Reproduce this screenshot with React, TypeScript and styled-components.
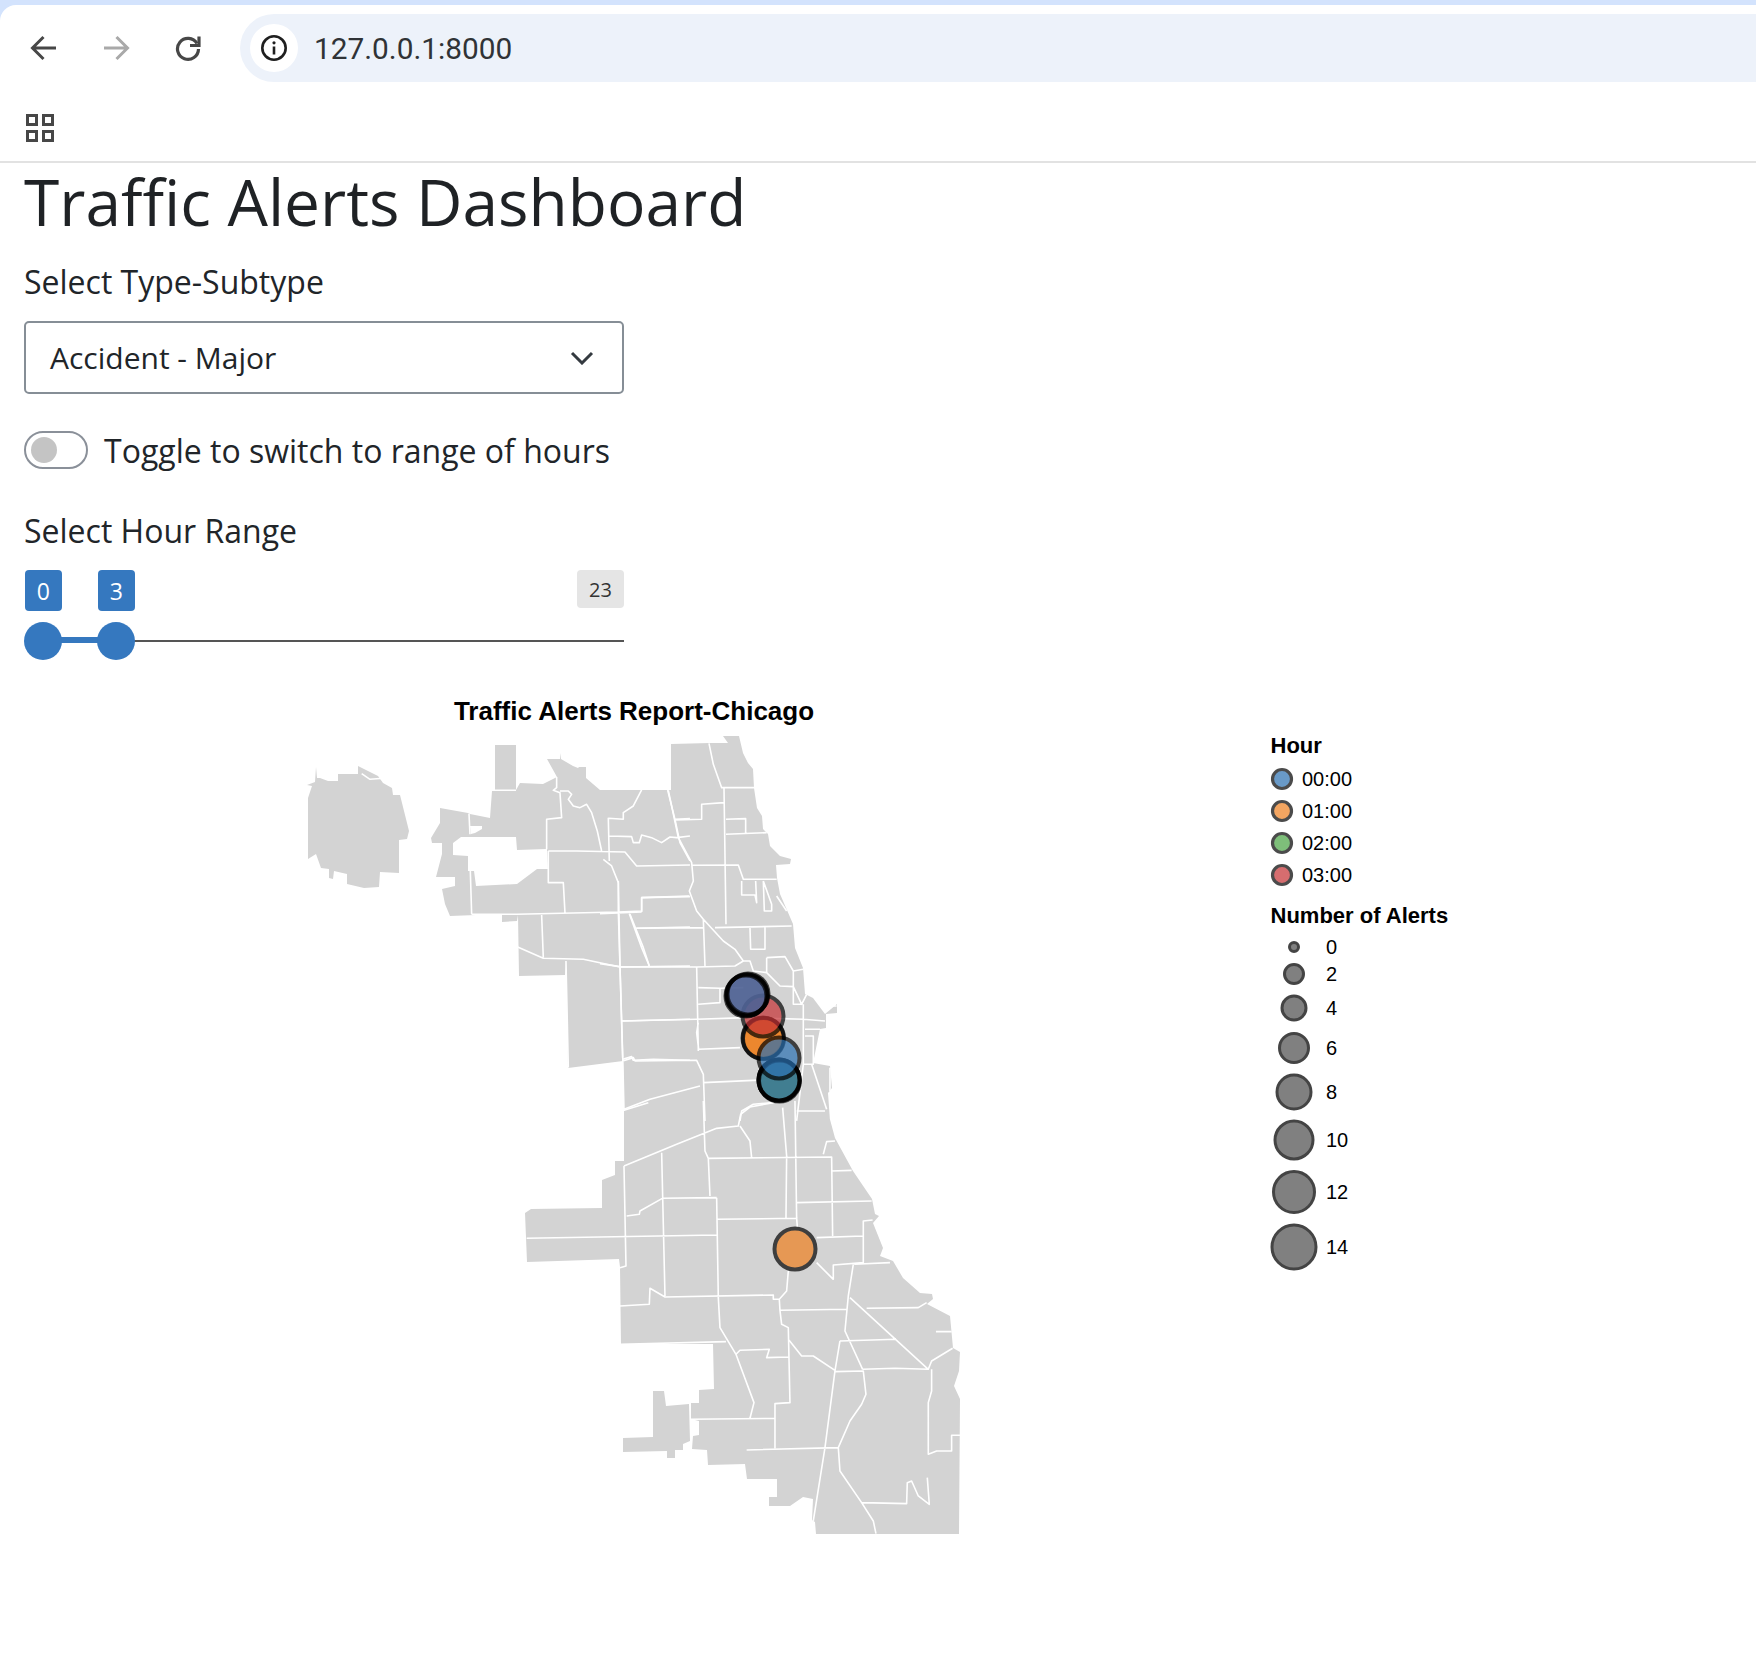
import React from 'react'
import styled, { createGlobalStyle } from 'styled-components'

const GlobalStyle = createGlobalStyle`
    html, body {
        margin: 0;
        padding: 0;
        background: #fff;
    }
    body {
        font-family: 'Open Sans', sans-serif;
        color: #212529;
        overflow: hidden;
    }
`

const Page = styled.div`
    width: 1756px;
    height: 1676px;
    background: #d3e3fd;
    overflow: hidden;
`
const Window = styled.div`
    margin-top: 5px;
    height: 1671px;
    background: #fff;
    border-top-left-radius: 16px;
`
const Toolbar = styled.div`
    height: 91px;
    box-sizing: border-box;
    padding-top: 9px;
    display: flex;
    align-items: flex-start;
`
const NavButton = styled.div`
    width: 72px;
    height: 68px;
    display: flex;
    align-items: center;
    justify-content: center;
    flex: none;
`
const NavGroup = styled.div`
    display: flex;
    padding-left: 8px;
    width: 232px;
    flex: none;
    box-sizing: content-box;
`
const UrlPill = styled.div`
    flex: 1;
    height: 68px;
    background: #edf2fa;
    border-radius: 34px 0 0 34px;
    display: flex;
    align-items: center;
    padding-left: 10px;
`
const InfoChip = styled.div`
    width: 48px;
    height: 48px;
    border-radius: 50%;
    background: #fff;
    display: flex;
    align-items: center;
    justify-content: center;
`
const UrlText = styled.span`
    font-family: Roboto, sans-serif;
    font-size: 29.8px;
    color: #303336;
    margin-left: 16px;
`
const BookmarkBar = styled.div`
    height: 67px;
    box-sizing: border-box;
    border-bottom: 2px solid #e2e2e2;
    padding: 18px 0 0 26px;
`
const Content = styled.main`
    padding-left: 24px;
`
const Title = styled.h1`
    margin: 0;
    padding-top: 2px;
    font-size: 64px;
    font-weight: 400;
    line-height: 74px;
    height: 78px;
    color: #1f2225;
`
const FieldLabel = styled.div<{ $top: number }>`
    font-size: 32px;
    line-height: 44px;
    margin-top: ${(p) => p.$top}px;
`
const SelectBox = styled.div`
    width: 600px;
    height: 73px;
    box-sizing: border-box;
    margin-top: 17px;
    border: 2px solid #868e96;
    border-radius: 5px;
    display: flex;
    align-items: center;
    justify-content: space-between;
    padding: 0 28px 0 24px;
    font-size: 30px;
`
const ToggleRow = styled.div`
    display: flex;
    align-items: center;
    gap: 16px;
    margin-top: 37px;
    height: 38px;
    font-size: 32px;
`
const ToggleTrack = styled.div`
    width: 64px;
    height: 38px;
    box-sizing: border-box;
    border: 2px solid #8a9099;
    border-radius: 19px;
    padding: 4px 0 0 5px;
`
const ToggleKnob = styled.div`
    width: 26px;
    height: 26px;
    border-radius: 50%;
    background: #c4c4c4;
`
const Slider = styled.div`
    width: 600px;
    margin-top: 17px;
`
const BadgeRow = styled.div`
    display: flex;
    align-items: flex-start;
    padding-left: 1px;
`
const Badge = styled.div`
    width: 36.500px;
    height: 41px;
    border-radius: 4px;
    background: #3578bf;
    color: #fff;
    font-size: 23px;
    display: flex;
    align-items: center;
    justify-content: center;
    margin-right: 36.500px;
`
const MaxBadge = styled.div`
    width: 47px;
    height: 38px;
    margin-left: auto;
    border-radius: 4px;
    background: #e5e5e5;
    color: #333;
    font-size: 20px;
    display: flex;
    align-items: center;
    justify-content: center;
`
const Track = styled.div`
    position: relative;
    height: 2px;
    margin: 29px 0 0 19px;
    background: #555;
`
const TrackFill = styled.div`
    position: absolute;
    left: 0;
    top: -3px;
    width: 73px;
    height: 6px;
    background: #3578bf;
`
const Handle = styled.div<{ $left: number }>`
    position: absolute;
    top: -18px;
    left: ${(p) => p.$left - 19}px;
    width: 38px;
    height: 38px;
    border-radius: 50%;
    background: #3578bf;
`
const Chart = styled.svg`
    display: block;
    margin: 39px 0 0 -24px;
    font-family: 'Liberation Sans', Arial, sans-serif;
`
const ChartTitle = styled.text`
    font-size: 26px;
    font-weight: 700;
    fill: #000;
    text-anchor: middle;
`
const LegendTitle = styled.text`
    font-size: 22px;
    font-weight: 700;
    fill: #000;
`
const LegendLabel = styled.text`
    font-size: 20px;
    fill: #000;
`
const Land = styled.path`
    fill: #d3d3d3;
`
const Hole = styled.path`
    fill: #fff;
`
const Borders = styled.path`
    fill: none;
    stroke: #fff;
    stroke-width: 4.8;
    stroke-linejoin: round;
`
const Mark = styled.circle`
    stroke: #000;
    stroke-width: 4;
    opacity: 0.7;
`
const HourDot = styled.circle`
    stroke: #000;
    stroke-width: 3.2;
    opacity: 0.7;
`
const SizeDot = styled.circle`
    fill: #808080;
    stroke: #444;
    stroke-width: 3;
`

const BLUE = '#2b70b1'
const ORANGE = '#ef801f'
const GREEN = '#48a443'
const RED = '#c53033'

const LAND_MAIN =
    'M495 744L516 744L516 789L520 782L543 783L557 776L547 758L560 758L560 752L561 758L573 765L578 767L579 766L586 766L586 777L600 789L671 789L671 743L710 742L728 742L723 735L739 735L743 752L748 762L753 768L754 787L757 807L762 815L763 828L768 833L770 845L780 855L791 858L790 863L776 864L777 877L780 893L793 923L795 947L803 967L805 993L813 997L825 1013L837 1003L837 1012L826 1013L826 1027L820 1028L813 1062L830 1065L832 1087L828 1092L830 1120L825 1100L835 1137L853 1170L872 1198L875 1213L879 1215L873 1222L883 1247L880 1255L893 1260L903 1277L920 1292L932 1293L933 1298L927 1303L950 1315L953 1347L960 1351L959 1370L954 1385L960 1398L959 1533L816 1533L815 1521L812 1519L813 1498L803 1496L790 1505L769 1505L769 1496L777 1496L777 1478L747 1478L745 1463L708 1464L707 1449L692 1448L693 1435L699 1434L699 1420L691 1418L691 1402L699 1402L699 1389L714 1388L713 1343L621 1343L620 1266L619 1258L527 1261L525 1212L531 1208L602 1207L602 1179L615 1174L615 1160L624 1160L624 1100L623 1060L568 1067L566 960L565 974L519 975L518 914L517 920L502 921L502 913L450 915L445 903L442 888L455 885L455 876L436 876L442 853L442 842L432 842L431 837L440 822L440 807L468 812L470 813L490 817L492 790L495 790Z'
const LAND_OHARE =
    'M308 797L312 785L307 784L315 781L316 766L317 777L320 777L328 780L338 780L338 773L358 773L358 765L378 775L383 782L392 787L393 794L400 794L409 830L407 838L399 839L399 872L380 871L379 886L364 887L347 883L347 873L334 870L333 878L329 877L329 868L321 867L316 853L308 858Z'
const LAND_SOUTH =
    'M653 1390L664 1390L666 1405L689 1403L690 1440L683 1443L683 1449L675 1449L675 1457L667 1457L667 1450L623 1451L623 1437L653 1436Z'
const HOLES =
    'M453 842L461 836L516 836L517 849L547 848L548 868L537 868L517 883L476 885L474 870L468 870L468 855L453 854Z M470 825L482 825L482 828L475 832L471 833Z'

const LINES_NORTHWEST = [
    'M215 248L240 265L280 262',
    'M605 298L678 298',
    'M537 368L540 430',
    'M800 258L800 290L790 298L810 305L815 380L770 385L770 475',
    'M810 300L835 300L845 310L835 325L850 345L870 350L890 340L905 365L922 420L935 480',
    'M955 380L958 510',
    'M955 382L1000 385L1000 365L1030 345L1055 297',
    'M958 435L1025 437L1030 455L1048 455L1055 432L1085 440L1115 455L1140 438L1160 440L1200 435',
    'M1133 297L1155 385L1200 383',
    'M1155 385L1170 455L1200 510',
    'M775 480L860 480L1005 483L1040 525L1200 522',
    'M775 480L775 575L820 575L825 665',
    'M940 505L965 525L985 575L985 660L990 825L998 1100',
    'M545 670L680 670L985 663L1055 660L1055 620L1200 617',
    'M541 540L545 670',
    'M755 672L760 800',
    'M683 768L760 802L880 805L990 828L1200 825',
    'M828 810L835 1130',
    'M1018 668L1055 770L1078 825',
    'M1035 712L1200 708',
    'M995 990L1200 985',
    'M998 1105L1025 1097L1030 1108L1090 1105L1200 1108',
]

const LINES_CENTRAL = [
    'M327 67L340 130L365 200L372 200L378 610',
    'M372 200L465 200',
    'M372 245L305 250L305 295L225 297',
    'M205 208L235 350L275 425L280 480L268 510L290 570L310 595L370 660L405 685L430 720L450 720L460 750L500 755L540 795L580 797L605 850L620 820',
    'M378 295L437 293L437 337',
    'M378 340L500 335',
    'M278 433L415 432L430 475L530 475',
    'M425 480L425 522L465 522L470 545L467 480',
    'M490 480L515 550L515 570L493 570L490 480',
    'M310 595L315 735',
    'M345 620L575 615',
    'M450 620L452 685L495 685L495 618',
    'M110 622L310 620',
    'M125 573L125 530L268 525',
    'M0 578L125 573',
    'M90 580L130 680L148 735',
    'M0 728L60 737L290 738L405 735L430 720',
    'M55 480L60 737L68 1000L72 1170',
    'M290 738L295 990',
    'M295 800L360 802L360 845L295 850',
    'M360 802L430 800',
    'M65 900L290 895L440 890L610 895L675 900',
    'M295 905L290 935L296 985L420 980',
    'M68 1020L100 1010L105 1020L290 1018L310 1060L315 1200',
    'M310 1085L530 1075L590 1030',
    'M72 1165L150 1135L300 1095',
    'M500 710L555 707L580 750L610 745',
    'M500 710L500 755',
    'M580 750L580 850L605 850',
    'M610 850L610 1030L590 1200',
    'M615 925L660 925',
    'M615 945L640 945L640 1030L610 1030',
    'M635 1030L680 1165',
    'M420 1200L425 1170L460 1150L520 1145',
    'M530 525L560 570',
    'M690 1040L690 1110',
    'M680 855L710 855',
]

const LINES_SOUTH = [
    'M372 28L445 5',
    'M372 195L530 130L650 82L715 75L722 40L750 18L820 5',
    'M610 0L615 150L625 172L630 285',
    'M720 75L750 120L755 170',
    'M848 20L860 165L858 352',
    'M885 0L890 350L892 378',
    'M890 30L975 30',
    'M625 172L995 168L998 405',
    'M970 160L980 122L1005 120',
    'M995 210L1055 208',
    'M890 305L1115 300',
    'M650 355L890 352',
    'M650 290L487 292L420 330L418 340L380 345',
    'M485 155L495 585',
    'M650 290L655 590L660 680L708 760L762 905L750 952',
    'M372 195L378 495L360 500',
    'M80 412L650 402',
    'M360 615L448 610L450 562L495 588L820 582L820 595L838 595L860 570L865 510',
    'M838 595L840 628L845 670L865 680L870 905L825 908L825 1042',
    'M840 628L1040 625',
    'M1090 405L950 410',
    'M1118 357L1090 360L1090 485L1000 492L1000 535L950 485',
    'M1063 490L1170 485',
    'M1060 490L1045 585L1035 690L1088 805',
    'M1050 590L1285 805',
    'M1100 622L1255 620L1280 605',
    'M1020 720L1188 715',
    'M1020 720L1005 810L975 1040L940 1260',
    'M865 715L905 765L940 765L1005 808',
    'M1005 812L1090 810L1098 880L1085 910L1050 960L1015 1040L740 1047',
    'M1088 805L1185 802L1285 805L1295 780L1358 742',
    'M1295 805L1295 870L1285 905L1285 1060L1310 1050L1355 1050L1355 1003L1380 1003',
    'M1308 692L1355 692',
    'M1015 1040L1020 1110L1085 1205L1120 1260L1128 1298',
    'M1085 1205L1220 1208L1222 1145L1235 1140L1255 1185L1288 1210L1282 1130',
    'M572 955L825 952',
    'M362 730L678 722',
    'M708 760L720 748L808 745L800 770L865 768',
]

// hour colour, x, y for every alert circle, drawn in this order.
// 'none' rings thicken the outline where several circles nearly coincide
const MARKS: [string, number, number][] = [
    [ORANGE, 763, 1037],
    [ORANGE, 763.5, 1037.5],
    [RED, 763, 1015],
    [RED, 747, 994],
    [BLUE, 747, 994],
    ['none', 746, 995],
    ['none', 748, 993],
    [ORANGE, 779, 1079],
    [GREEN, 779, 1079],
    [BLUE, 779, 1079],
    ['none', 779.5, 1080],
    [BLUE, 779, 1057],
    [ORANGE, 795, 1248],
]

const HOURS: [string, string, number][] = [
    ['00:00', BLUE, 778],
    ['01:00', ORANGE, 810],
    ['02:00', GREEN, 842],
    ['03:00', RED, 874],
]

const SIZES: [string, number, number][] = [
    ['0', 946, 4.5],
    ['2', 973, 9.5],
    ['4', 1007, 12],
    ['6', 1047, 14.5],
    ['8', 1091, 17],
    ['10', 1139, 19],
    ['12', 1191, 20.5],
    ['14', 1246, 22],
]

function ChromeIcons() {
    return (
        <NavGroup>
            <NavButton>
                <svg width="28" height="26" viewBox="0 0 28 26">
                    <path d="M26 13H3M13.5 2L2.5 13l11 11" fill="none" stroke="#474747" strokeWidth="3" />
                </svg>
            </NavButton>
            <NavButton>
                <svg width="28" height="26" viewBox="0 0 28 26">
                    <path d="M2 13h23M14.5 2l11 11-11 11" fill="none" stroke="#a9a9a9" strokeWidth="3" />
                </svg>
            </NavButton>
            <NavButton>
                <svg width="28" height="28" viewBox="0 0 28 28">
                    <path d="M23 9.5A10.5 10.5 0 1 0 24.5 15" fill="none" stroke="#474747" strokeWidth="3.2" />
                    <path d="M25 2.500v9h-9" fill="none" stroke="#474747" strokeWidth="3.2" />
                </svg>
            </NavButton>
        </NavGroup>
    )
}

function App() {
    return (
        <Page>
            <GlobalStyle />
            <Window>
                <Toolbar>
                    <ChromeIcons />
                    <UrlPill>
                        <InfoChip>
                            <svg width="28" height="28" viewBox="0 0 28 28">
                                <circle cx="14" cy="14" r="11.7" fill="none" stroke="#1f1f1f" strokeWidth="2.6" />
                                <path d="M14 12.5v8" stroke="#1f1f1f" strokeWidth="2.6" />
                                <circle cx="14" cy="8.8" r="1.6" fill="#1f1f1f" />
                            </svg>
                        </InfoChip>
                        <UrlText>127.0.0.1:8000</UrlText>
                    </UrlPill>
                </Toolbar>
                <BookmarkBar>
                    <svg width="28" height="28" viewBox="0 0 28 28">
                        <path
                            d="M1.500 1.500h9v9h-9zM17.500 1.500h9v9h-9zM1.500 17.500h9v9h-9zM17.500 17.500h9v9h-9z"
                            fill="none"
                            stroke="#474747"
                            strokeWidth="3"
                        />
                    </svg>
                </BookmarkBar>
                <Content>
                    <Title>Traffic Alerts Dashboard</Title>
                    <FieldLabel $top={17}>Select Type-Subtype</FieldLabel>
                    <SelectBox>
                        <span>Accident - Major</span>
                        <svg width="24" height="14" viewBox="0 0 24 14">
                            <path d="M2 2l10 10L22 2" fill="none" stroke="#343a40" strokeWidth="3" />
                        </svg>
                    </SelectBox>
                    <ToggleRow>
                        <ToggleTrack>
                            <ToggleKnob />
                        </ToggleTrack>
                        <span>Toggle to switch to range of hours</span>
                    </ToggleRow>
                    <FieldLabel $top={40}>Select Hour Range</FieldLabel>
                    <Slider>
                        <BadgeRow>
                            <Badge>0</Badge>
                            <Badge>3</Badge>
                            <MaxBadge>23</MaxBadge>
                        </BadgeRow>
                        <Track>
                            <TrackFill />
                            <Handle $left={0} />
                            <Handle $left={73} />
                        </Track>
                    </Slider>
                    <Chart width="1756" height="890" viewBox="0 680 1756 890">
                        <ChartTitle x="634" y="719">
                            Traffic Alerts Report-Chicago
                        </ChartTitle>
                        <Land d={LAND_OHARE} />
                        <Land d={LAND_MAIN} />
                        <Land d={LAND_SOUTH} />
                        <Hole d={HOLES} />
                        <g transform="translate(290 690) scale(0.3333)">
                            <Borders d={LINES_NORTHWEST.join('')} />
                        </g>
                        <g transform="translate(600 720) scale(0.3333)">
                            <Borders d={LINES_CENTRAL.join('')} />
                        </g>
                        <g transform="translate(500 1100) scale(0.3333)">
                            <Borders d={LINES_SOUTH.join('')} />
                        </g>
                        {MARKS.map(([color, x, y], i) => (
                            <Mark key={i} cx={x} cy={y} r={20.5} fill={color} />
                        ))}
                        <LegendTitle x="1270.500" y="752">
                            Hour
                        </LegendTitle>
                        {HOURS.map(([label, color, y]) => (
                            <g key={label}>
                                <HourDot cx={1282} cy={y} r={9.5} fill={color} />
                                <LegendLabel x="1302" y={y + 7}>
                                    {label}
                                </LegendLabel>
                            </g>
                        ))}
                        <LegendTitle x="1270.500" y="922">
                            Number of Alerts
                        </LegendTitle>
                        {SIZES.map(([label, y, r]) => (
                            <g key={label}>
                                <SizeDot cx={1294} cy={y} r={r} />
                                <LegendLabel x="1326" y={y + 7}>
                                    {label}
                                </LegendLabel>
                            </g>
                        ))}
                    </Chart>
                </Content>
            </Window>
        </Page>
    )
}

export default App
